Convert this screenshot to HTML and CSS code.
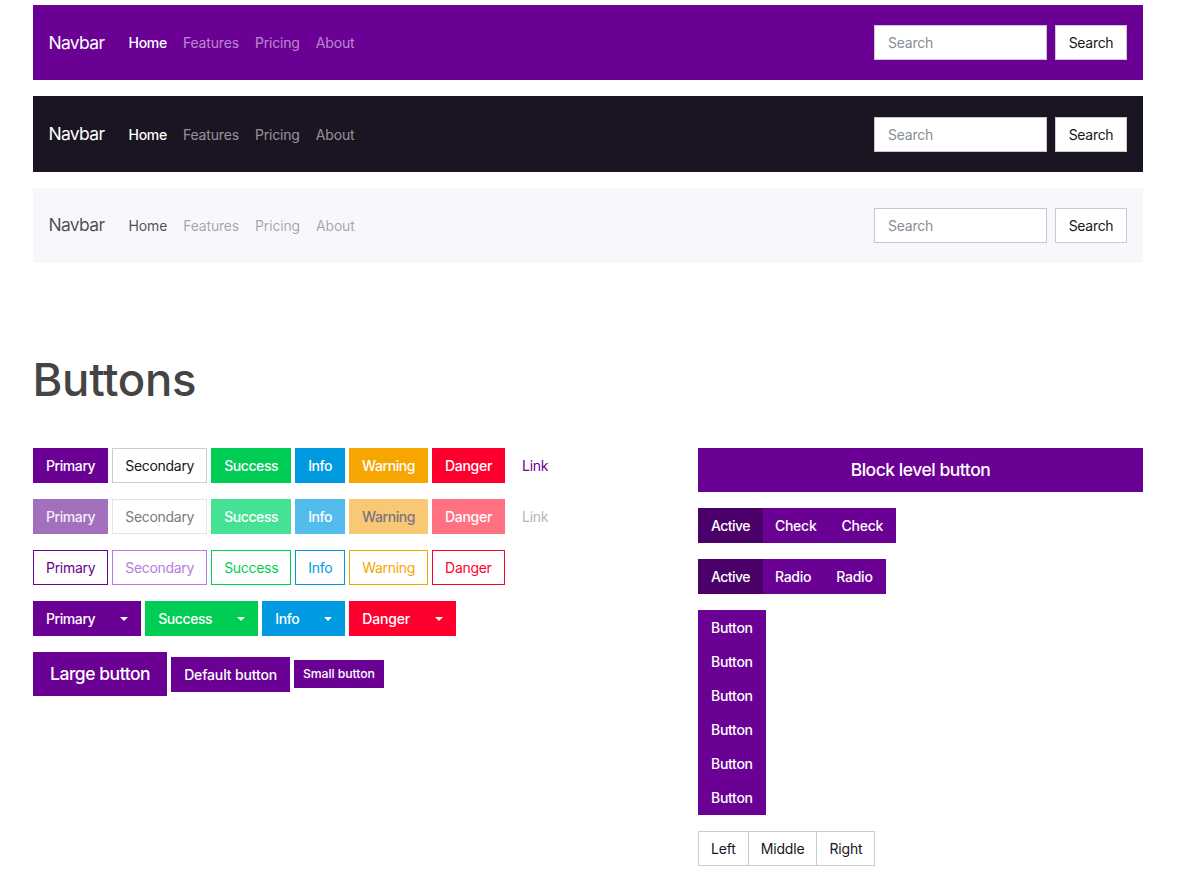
FILE: index.html
```html
<!DOCTYPE html>
<html lang="en">
<head>
<meta charset="utf-8">
<title>Buttons</title>
<link rel="stylesheet" href="styles.css">
</head>
<body>
<div class="container">
  <nav class="navbar navbar-primary">
    <a class="brand" href="#">Navbar</a>
    <ul class="nav">
      <li><a class="nav-link active" href="#">Home</a></li>
      <li><a class="nav-link" href="#">Features</a></li>
      <li><a class="nav-link" href="#">Pricing</a></li>
      <li><a class="nav-link" href="#">About</a></li>
    </ul>
    <form class="search">
      <input class="search-input" type="text" placeholder="Search">
      <button class="btn btn-secondary search-btn" type="button">Search</button>
    </form>
  </nav>
  <nav class="navbar navbar-dark">
    <a class="brand" href="#">Navbar</a>
    <ul class="nav">
      <li><a class="nav-link active" href="#">Home</a></li>
      <li><a class="nav-link" href="#">Features</a></li>
      <li><a class="nav-link" href="#">Pricing</a></li>
      <li><a class="nav-link" href="#">About</a></li>
    </ul>
    <form class="search">
      <input class="search-input" type="text" placeholder="Search">
      <button class="btn btn-secondary search-btn" type="button">Search</button>
    </form>
  </nav>
  <nav class="navbar navbar-light">
    <a class="brand" href="#">Navbar</a>
    <ul class="nav">
      <li><a class="nav-link active" href="#">Home</a></li>
      <li><a class="nav-link" href="#">Features</a></li>
      <li><a class="nav-link" href="#">Pricing</a></li>
      <li><a class="nav-link" href="#">About</a></li>
    </ul>
    <form class="search">
      <input class="search-input" type="text" placeholder="Search">
      <button class="btn btn-secondary search-btn" type="button">Search</button>
    </form>
  </nav>

  <h1 class="title">Buttons</h1>

  <div class="columns">
    <div class="col-left">
      <div class="btn-row">
        <button class="btn btn-primary">Primary</button>
        <button class="btn btn-secondary">Secondary</button>
        <button class="btn btn-success">Success</button>
        <button class="btn btn-info">Info</button>
        <button class="btn btn-warning">Warning</button>
        <button class="btn btn-danger">Danger</button>
        <button class="btn btn-link">Link</button>
      </div>
      <div class="btn-row">
        <button class="btn filled disabled-primary">Primary</button>
        <button class="btn disabled-secondary">Secondary</button>
        <button class="btn filled disabled-success">Success</button>
        <button class="btn filled disabled-info">Info</button>
        <button class="btn filled disabled-warning">Warning</button>
        <button class="btn filled disabled-danger">Danger</button>
        <button class="btn btn-link link-disabled">Link</button>
      </div>
      <div class="btn-row">
        <button class="btn outline-primary">Primary</button>
        <button class="btn outline-secondary">Secondary</button>
        <button class="btn outline-success">Success</button>
        <button class="btn outline-info">Info</button>
        <button class="btn outline-warning">Warning</button>
        <button class="btn outline-danger">Danger</button>
      </div>
      <div class="btn-row">
        <button class="btn btn-primary dropdown">Primary</button>
        <button class="btn btn-success dropdown">Success</button>
        <button class="btn btn-info dropdown">Info</button>
        <button class="btn btn-danger dropdown">Danger</button>
      </div>
      <div class="btn-row sizes">
        <button class="btn btn-primary btn-lg">Large button</button>
        <button class="btn btn-primary btn-default">Default button</button>
        <button class="btn btn-primary btn-sm">Small button</button>
      </div>
    </div>

    <div class="col-right">
      <button class="btn btn-primary btn-lg btn-block">Block level button</button>
      <div class="group">
        <button class="btn btn-primary is-active">Active</button>
        <button class="btn btn-primary">Check</button>
        <button class="btn btn-primary">Check</button>
      </div>
      <div class="group">
        <button class="btn btn-primary is-active">Active</button>
        <button class="btn btn-primary">Radio</button>
        <button class="btn btn-primary">Radio</button>
      </div>
      <div class="group-vertical">
        <button class="btn btn-primary">Button</button>
        <button class="btn btn-primary">Button</button>
        <button class="btn btn-primary">Button</button>
        <button class="btn btn-primary">Button</button>
        <button class="btn btn-primary">Button</button>
        <button class="btn btn-primary">Button</button>
      </div>
      <div class="group group-plain">
        <button class="btn btn-secondary">Left</button>
        <button class="btn btn-secondary">Middle</button>
        <button class="btn btn-secondary">Right</button>
      </div>
    </div>
  </div>
</div>
</body>
</html>
```
FILE: styles.css
```css
* { box-sizing: border-box; }

html, body { margin: 0; padding: 0; }

body {
  background: #fff;
  color: #1a1423;
  font-family: Inter, "Liberation Sans", sans-serif;
  font-size: 14px;
  line-height: 1.5;
}

.container {
  width: 1110px;
  margin-left: 33px;
  padding-top: 5px;
}

/* Navbars */
.navbar {
  display: flex;
  align-items: center;
  height: 75.4px;
  padding: 0 16px;
  margin-bottom: 16px;
}

.navbar-primary { background: #6a0094; }
.navbar-dark { background: #1a1423; }
.navbar-light { background: #f8f7fc; }

.brand {
  font-size: 17.5px;
  line-height: 26px;
  letter-spacing: -0.7px;
  margin-left: -0.5px;
  margin-right: 16.3px;
  text-decoration: none;
}

.nav {
  display: flex;
  list-style: none;
  margin: 0;
  padding: 0;
  flex: 1;
}

.nav-link {
  display: block;
  padding: 8px;
  text-decoration: none;
  font-weight: 400;
  letter-spacing: -0.17px;
}

.navbar-primary .brand,
.navbar-dark .brand { color: #fff; }

.navbar-primary .nav-link.active,
.navbar-dark .nav-link.active {
  color: #fff;
  font-weight: 450;
  letter-spacing: -0.3px;
}

.navbar-primary .nav-link { color: rgba(255, 255, 255, 0.55); }
.navbar-dark .nav-link { color: rgba(255, 255, 255, 0.55); }
.navbar-light .brand,
.navbar-light .nav-link.active { color: rgba(0, 0, 0, 0.7); }
.navbar-light .nav-link { color: rgba(0, 0, 0, 0.35); }

.search {
  display: flex;
  gap: 8px;
  margin: 0;
}

.search-input {
  width: 173px;
  height: 35px;
  padding: 6px 13px;
  background: #fff;
  border: 1px solid #c8c4d0;
  color: #1a1423;
  font: inherit;
  letter-spacing: -0.25px;
  outline: none;
}

.search-input::placeholder { color: #868e96; opacity: 1; }

.search-btn {
  width: 72px;
  padding-left: 0;
  padding-right: 0;
  border-color: #c8c4d0;
  letter-spacing: -0.2px;
}

/* Heading */
.title {
  margin: 0 0 40px -0.5px;
  padding-top: 74.3px;
  color: #444;
  font-size: 45.5px;
  font-weight: 550;
  letter-spacing: -0.3px;
  line-height: 1.2;
}

/* Columns */
.columns {
  display: grid;
  grid-template-columns: 635px 445px;
  gap: 30px;
  align-items: start;
}

.btn-row {
  display: flex;
  gap: 4px;
  margin-bottom: 16px;
}

.sizes { align-items: center; }

.col-right {
  display: flex;
  flex-direction: column;
  align-items: flex-start;
  gap: 16px;
}

/* Buttons */
.btn {
  display: inline-block;
  padding: 6px 12px;
  border: 1px solid transparent;
  border-radius: 0;
  background: transparent;
  color: #1a1423;
  font-family: inherit;
  font-size: 14px;
  font-weight: 400;
  letter-spacing: -0.3px;
  line-height: 21px;
  text-align: center;
  white-space: nowrap;
  cursor: pointer;
}

.filled,
.btn-primary,
.btn-success,
.btn-info,
.btn-warning,
.btn-danger {
  font-weight: 450;
  letter-spacing: -0.42px;
}

.btn-danger,
.disabled-danger { letter-spacing: -0.3px; }

.btn-primary { background: #6a0094; border-color: #6a0094; color: #fff; }
.btn-secondary { background: #fff; border-color: #ccc; color: #1a1423; }
.btn-success { background: #00ce54; border-color: #00ce54; color: #fff; }
.btn-info { background: #009ae0; border-color: #009ae0; color: #fff; }
.btn-warning { background: #f7a500; border-color: #f7a500; color: #fff; }
.btn-danger { background: #ff002e; border-color: #ff002e; color: #fff; }

.btn-link { color: #6a0094; }
.link-disabled { color: #b4b6bc; }

.disabled-primary { background: #a370bd; border-color: #a370bd; color: #f4eef8; }
.disabled-secondary { background: #fff; border-color: #e4e4e4; color: #7c7880; }
.disabled-success { background: #45e296; border-color: #45e296; color: #fff; }
.disabled-info { background: #52bdec; border-color: #52bdec; color: #fff; }
.disabled-warning { background: #f8c874; border-color: #f8c874; color: #7b7480; }
.disabled-danger { background: #ff7080; border-color: #ff7080; color: #fff; }

.outline-primary { background: #fff; border-color: #6a0094; color: #6a0094; }
.outline-secondary { background: #fff; border-color: #b57edc; color: #b57edc; }
.outline-success { background: #fff; border-color: #00ce54; color: #00ce54; }
.outline-info { background: #fff; border-color: #009ae0; color: #009ae0; }
.outline-warning { background: #fff; border-color: #f7a500; color: #f7a500; }
.outline-danger { background: #fff; border-color: #ff002e; color: #ff002e; }

.dropdown { letter-spacing: -0.42px; }
.btn-danger.dropdown { letter-spacing: -0.15px; }

.dropdown::after {
  content: "";
  display: inline-block;
  margin-left: 25px;
  vertical-align: 3px;
  border-top: 4px solid;
  border-left: 4px solid transparent;
  border-right: 4px solid transparent;
}

.btn-default { letter-spacing: -0.15px; }

.btn-lg {
  padding: 8px 16px;
  font-size: 17.5px;
  letter-spacing: -0.47px;
  line-height: 26.25px;
}

.btn-sm {
  padding: 4px 8px;
  font-size: 12.25px;
  letter-spacing: -0.08px;
  line-height: 18.4px;
}

.btn-block { width: 100%; }

.group { display: flex; }
.group .btn + .btn {
  margin-left: -1px;
  letter-spacing: -0.25px;
}
.group .is-active { letter-spacing: -0.55px; }
.group-plain .btn,
.group-plain .btn + .btn { letter-spacing: -0.17px; }
.is-active { background: #4a0068; border-color: #4a0068; position: relative; }

.group-vertical {
  display: flex;
  flex-direction: column;
}
.group-vertical .btn { letter-spacing: -0.3px; }
.group-vertical .btn + .btn { margin-top: -1px; }
```
